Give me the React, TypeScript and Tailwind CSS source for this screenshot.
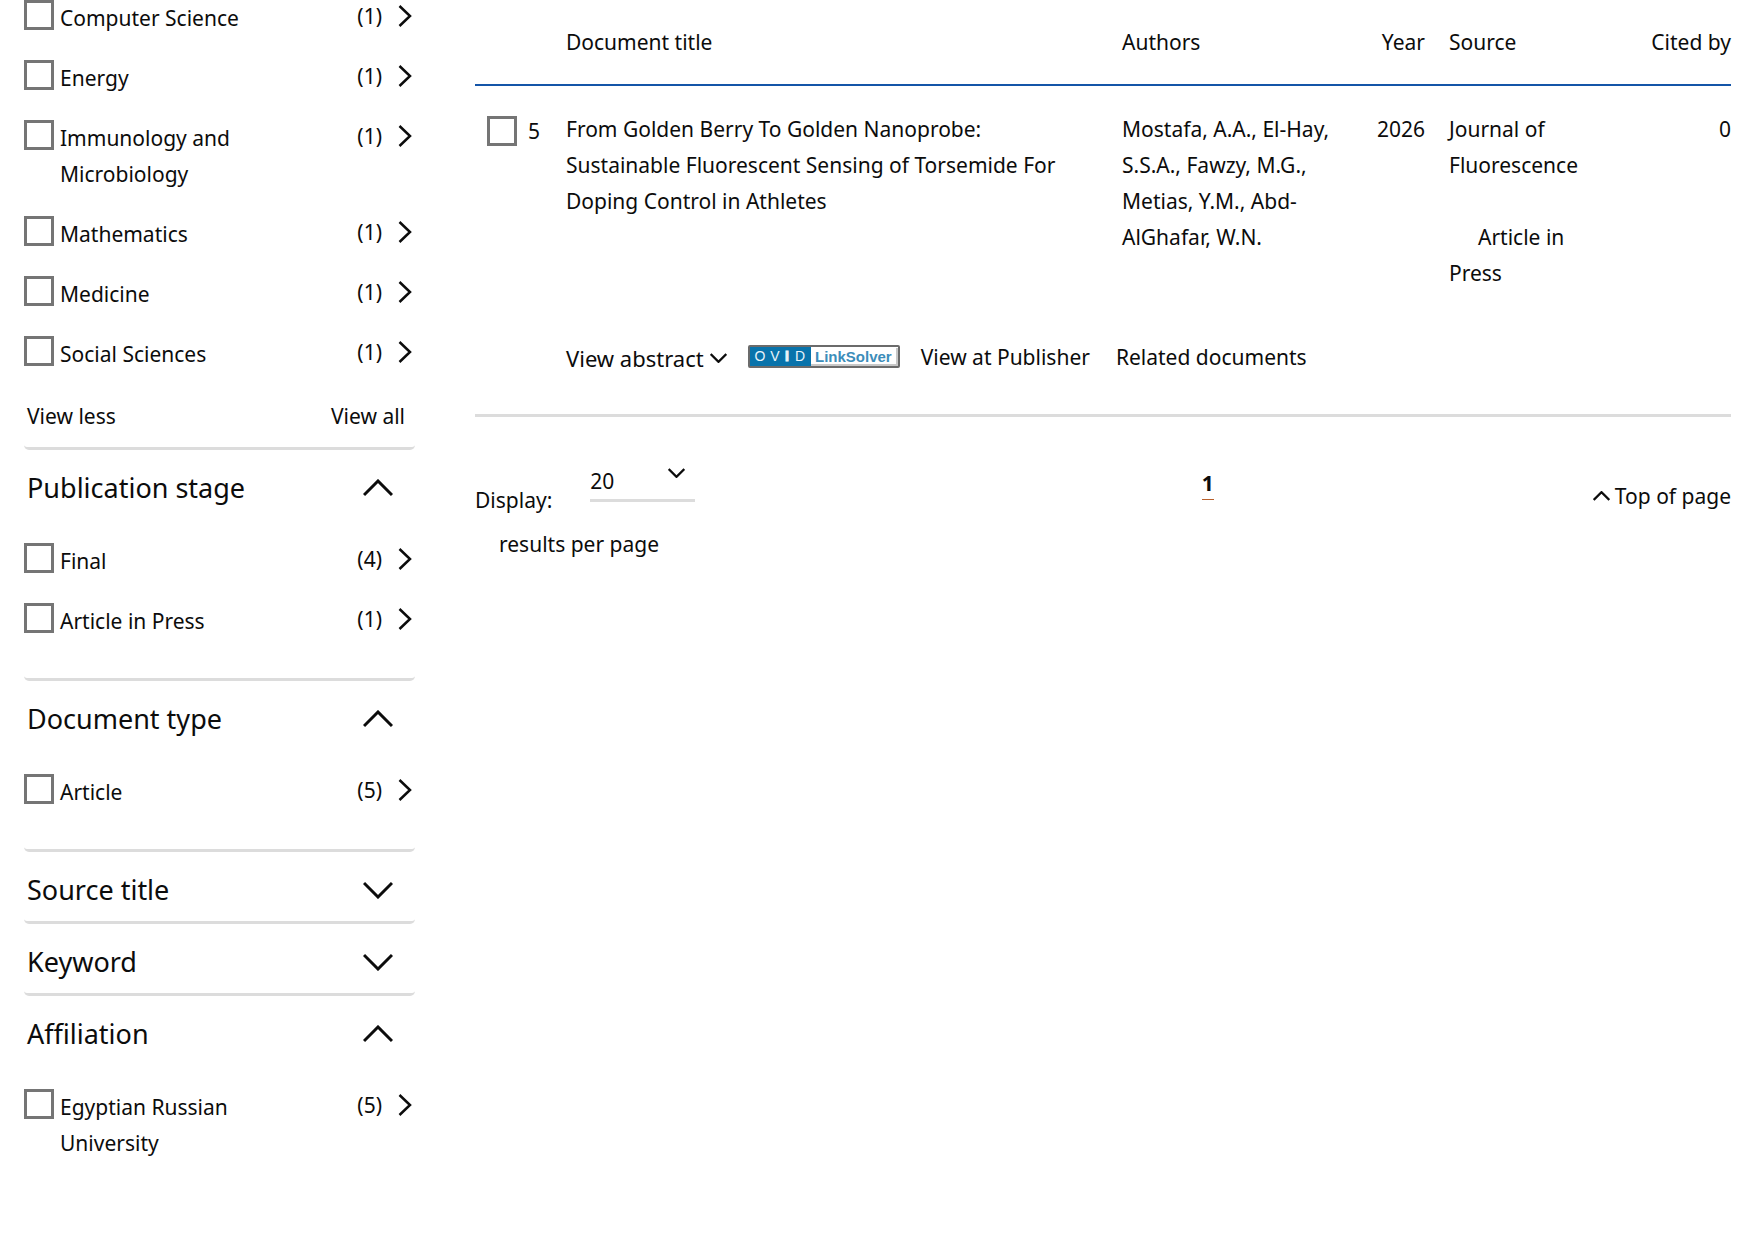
import React from "react";

type Direction = "up" | "down" | "right";

const chevronPoints: Record<Direction, string> = {
  up: "1,16 15,2 29,16",
  down: "1,2 15,16 29,2",
  right: "3,2 24,22 3,42",
};

function Chevron({ direction, className, weight = 3 }: { direction: Direction; className: string; weight?: number }) {
  return (
    <svg
      viewBox={direction === "right" ? "0 0 28 44" : "0 0 30 18"}
      className={className}
      fill="none"
      stroke="currentColor"
      strokeWidth={weight}
      aria-hidden="true"
    >
      <polyline points={chevronPoints[direction]} />
    </svg>
  );
}

const boxClass = "size-[30px] shrink-0 appearance-none border-[3px] border-[#757575] bg-white checked:bg-[#757575]";

interface Facet {
  name: string;
  count: number;
}

function FacetRow({ name, count }: Facet) {
  const id = "facet-" + name.toLowerCase().replace(/ /g, "-");
  return (
    <li className="flex items-start pb-6">
      <input id={id} type="checkbox" className={boxClass} />
      <label htmlFor={id} className="ml-1.5 w-[210px]">
        {name}
      </label>
      <span className="ml-auto -mt-0.5">({count})</span>
      <button type="button" aria-label={"Expand " + name} className="mt-[5px] mr-[3px] ml-4">
        <Chevron direction="right" className="h-[22px] w-[14px]" weight={5} />
      </button>
    </li>
  );
}

function Section({ title, facets, last = false }: { title: string; facets?: Facet[]; last?: boolean }) {
  return (
    <section className={last ? "" : "rounded-b-[5px] border-b-[3px] border-[#dcdcdc]"}>
      <h3>
        <button
          type="button"
          aria-expanded={!!facets}
          className="flex h-[69px] w-full items-center justify-between pt-[7px] pr-[22px] pl-[3px] text-left text-[27px] leading-9"
        >
          {title}
          <Chevron direction={facets ? "up" : "down"} className="h-[18px] w-[30px]" />
        </button>
      </h3>
      {facets && (
        <ul className="pt-6 pb-[15px]">
          {facets.map((f) => (
            <FacetRow key={f.name} {...f} />
          ))}
        </ul>
      )}
    </section>
  );
}

const subjects: Facet[] = [
  { name: "Computer Science", count: 1 },
  { name: "Energy", count: 1 },
  { name: "Immunology and Microbiology", count: 1 },
  { name: "Mathematics", count: 1 },
  { name: "Medicine", count: 1 },
  { name: "Social Sciences", count: 1 },
];

function Sidebar() {
  return (
    <aside className="w-[391px] shrink-0">
      <section className="rounded-b-[5px] border-b-[3px] border-[#dcdcdc] pb-[13px]">
        <ul>
          {subjects.map((f) => (
            <FacetRow key={f.name} {...f} />
          ))}
        </ul>
        <div className="mt-0.5 flex justify-between pr-[10px] pl-[3px]">
          <button type="button">View less</button>
          <button type="button">View all</button>
        </div>
      </section>
      <Section
        title="Publication stage"
        facets={[
          { name: "Final", count: 4 },
          { name: "Article in Press", count: 1 },
        ]}
      />
      <Section title="Document type" facets={[{ name: "Article", count: 5 }]} />
      <Section title="Source title" />
      <Section title="Keyword" />
      <Section title="Affiliation" facets={[{ name: "Egyptian Russian University", count: 5 }]} last />
    </aside>
  );
}

function OvidBadge() {
  return (
    <a href="#linksolver" aria-label="OVID LinkSolver" className="mx-[21px] block">
      <svg viewBox="0 0 152 23" className="h-[23px] w-[152px]">
        <rect x="1" y="1" width="150" height="21" rx="1" fill="#fff" stroke="#6b6b6b" strokeWidth="2" />
        <path d="M3 20H149V3" fill="none" stroke="#c8c8c8" strokeWidth="2" />
        <rect x="2" y="2" width="61" height="19" fill="#0873ab" />
        <g fontFamily="Liberation Sans, sans-serif">
          <g fill="#e9f4fa" fontSize="14" textAnchor="middle">
            <text x="12" y="16">O</text>
            <text x="27" y="16">V</text>
            <text x="39" y="16" fontWeight="bold" stroke="#e9f4fa" strokeWidth="1">I</text>
            <text x="52" y="16">D</text>
          </g>
          <text x="67" y="17" fill="#3c8dba" fontSize="15" fontWeight="bold">
            LinkSolver
          </text>
        </g>
      </svg>
    </a>
  );
}

function Results() {
  return (
    <table className="w-full table-fixed border-collapse text-left align-top">
      <colgroup>
        <col className="w-[78px]" />
        <col />
        <col className="w-[255px]" />
        <col className="w-[72px]" />
        <col className="w-[200px]" />
        <col className="w-[95px]" />
      </colgroup>
      <thead>
        <tr className="h-[85px] border-b-2 border-[#1455a8] [&>th]:font-normal">
          <th aria-label="Select" />
          <th className="px-[13px]">Document title</th>
          <th className="px-[13px]">Authors</th>
          <th className="pr-[11px] text-right">Year</th>
          <th className="px-[13px]">Source</th>
          <th className="text-right">Cited by</th>
        </tr>
      </thead>
      <tbody>
        <tr className="[&>td]:pt-[25px] [&>td]:align-top">
          <td>
            <div className="flex items-start gap-[11px] pl-3">
              <input id="doc-5" type="checkbox" className={boxClass + " mt-[5px]"} />
              <label htmlFor="doc-5" className="mt-0.5">
                5
              </label>
            </div>
          </td>
          <td className="px-[13px]">
            <a href="#document">
              From Golden Berry To Golden Nanoprobe:
              <br />
              Sustainable Fluorescent Sensing of Torsemide For
              <br />
              Doping Control in Athletes
            </a>
          </td>
          <td className="pl-[13px]">
            <a href="#authors">
              Mostafa, A.A., El-Hay,
              <br />
              S.S.A., Fawzy, M.G.,
              <br />
              Metias, Y.M., Abd-
              <br />
              AlGhafar, W.N.
            </a>
          </td>
          <td className="pr-[11px] text-right">2026</td>
          <td className="px-[13px]">
            <a href="#source">Journal of Fluorescence</a>
            <p className="w-[150px] pt-9 indent-[29px]">Article in Press</p>
          </td>
          <td className="text-right">0</td>
        </tr>
        <tr className="border-b-[3px] border-[#dcdcdc]">
          <td />
          <td colSpan={5} className="pt-[46px] pb-[38px] pl-[13px]">
            <div className="flex items-center">
              <button type="button" className="mt-[3px] flex items-center gap-[6px] text-[22px]">
                View abstract
                <Chevron direction="down" className="h-[10px] w-[17px]" weight={4} />
              </button>
              <OvidBadge />
              <a href="#publisher" className="mr-[26px]">
                View at Publisher
              </a>
              <a href="#related">Related documents</a>
            </div>
          </td>
        </tr>
      </tbody>
    </table>
  );
}

function Footer() {
  return (
    <footer className="flex items-start pt-[46px]">
      <div className="w-7/12">
        <div className="flex items-end gap-[38px]">
          <label htmlFor="page-size" className="-mb-4">
            Display:
          </label>
          <div className="relative border-b-[3px] border-[#dcdcdc]">
            <select id="page-size" defaultValue="20" className="h-[35px] w-[105px] appearance-none bg-transparent outline-none">
              <option>20</option>
              <option>50</option>
              <option>100</option>
              <option>200</option>
            </select>
            <Chevron direction="down" className="pointer-events-none absolute top-[5px] right-[10px] h-[10px] w-[17px]" weight={4} />
          </div>
        </div>
        <p className="mt-6 ml-6">results per page</p>
      </div>
      <nav aria-label="Pages" className="-ml-1.5">
        <a href="#page-1" aria-current="page" className="mt-[5px] block border-b border-[#b8602c] leading-[31px] font-bold">
          1
        </a>
      </nav>
      <a href="#top" className="mt-[15px] ml-auto flex items-center gap-[5px]">
        <Chevron direction="up" className="h-[10px] w-[17px]" weight={4} />
        Top of page
      </a>
    </footer>
  );
}

export default function App() {
  return (
    <div className="flex gap-[60px] bg-white pr-[23px] pl-6 font-['Noto_Sans',sans-serif] text-[21px] leading-9 text-[#0c0c0c]">
      <Sidebar />
      <main className="min-w-0 flex-1">
        <Results />
        <Footer />
      </main>
    </div>
  );
}
